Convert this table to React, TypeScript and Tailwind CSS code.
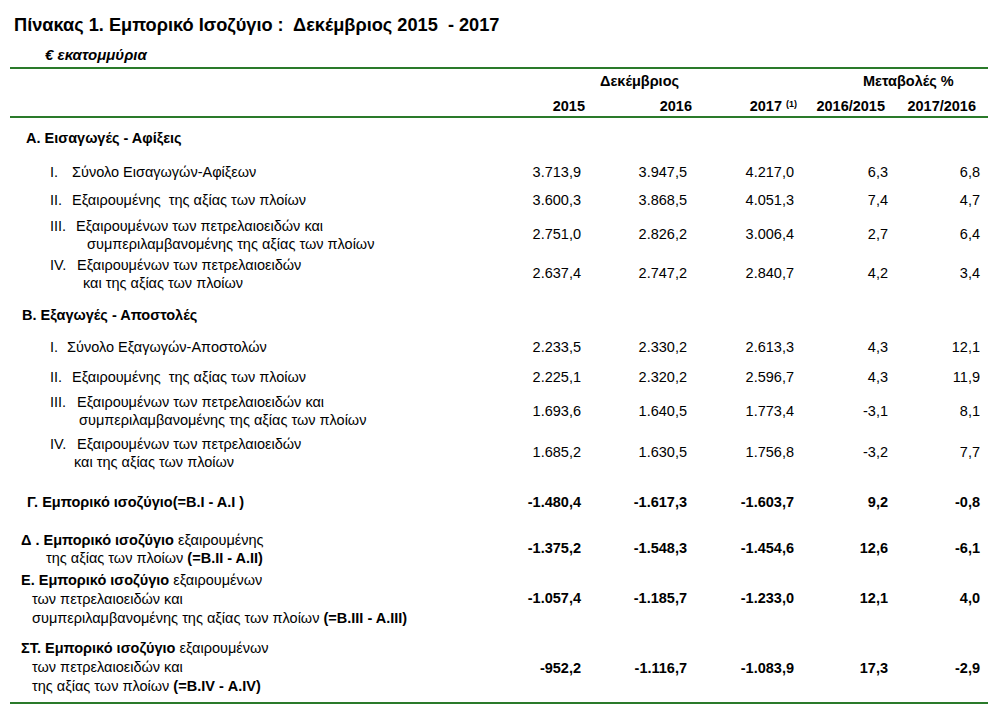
import React from 'react';

type Row = {
  h: string;
  label: React.ReactNode;
  vals?: string[];
  vpt?: string;
  bold?: boolean;
};

const B = ({ children }: { children: React.ReactNode }) => <span className="font-bold">{children}</span>;

const rows: Row[] = [
  {
    h: 'h-[34px]',
    label: <div className="pl-[16px] font-bold">Α. Εισαγωγές - Αφίξεις</div>,
  },
  {
    h: 'h-[28px]',
    label: (
      <div className="pl-[40px]">
        <span className="inline-block w-[22px]">I.</span>Σύνολο Εισαγωγών-Αφίξεων
      </div>
    ),
    vals: ['3.713,9', '3.947,5', '4.217,0', '6,3', '6,8'],
  },
  {
    h: 'h-[26px]',
    label: (
      <div className="pl-[40px] whitespace-pre">
        <span className="inline-block w-[22px]">II.</span>Εξαιρουμένης  της αξίας των πλοίων
      </div>
    ),
    vals: ['3.600,3', '3.868,5', '4.051,3', '7,4', '4,7'],
  },
  {
    h: 'h-[39px]',
    vpt: 'pt-[8px]',
    label: (
      <>
        <div className="pl-[40px]">
          <span className="inline-block w-[26px]">III.</span>Εξαιρουμένων των πετρελαιοειδών και
        </div>
        <div className="pl-[77px]">συμπεριλαμβανομένης της αξίας των πλοίων</div>
      </>
    ),
    vals: ['2.751,0', '2.826,2', '3.006,4', '2,7', '6,4'],
  },
  {
    h: 'h-[50px]',
    vpt: 'pt-[8px]',
    label: (
      <>
        <div className="pl-[40px]">
          <span className="inline-block w-[27px]">IV.</span>Εξαιρουμένων των πετρελαιοειδών
        </div>
        <div className="pl-[73px]">και της αξίας των πλοίων</div>
      </>
    ),
    vals: ['2.637,4', '2.747,2', '2.840,7', '4,2', '3,4'],
  },
  {
    h: 'h-[32px]',
    label: <div className="pl-[12px] font-bold">Β. Εξαγωγές - Αποστολές</div>,
  },
  {
    h: 'h-[30px]',
    label: (
      <div className="pl-[40px]">
        <span className="inline-block w-[17px]">I.</span>Σύνολο Εξαγωγών-Αποστολών
      </div>
    ),
    vals: ['2.233,5', '2.330,2', '2.613,3', '4,3', '12,1'],
  },
  {
    h: 'h-[25px]',
    label: (
      <div className="pl-[40px] whitespace-pre">
        <span className="inline-block w-[22px]">II.</span>Εξαιρουμένης  της αξίας των πλοίων
      </div>
    ),
    vals: ['2.225,1', '2.320,2', '2.596,7', '4,3', '11,9'],
  },
  {
    h: 'h-[42px]',
    vpt: 'pt-[9px]',
    label: (
      <>
        <div className="pl-[40px]">
          <span className="inline-block w-[27px]">III.</span>Εξαιρουμένων των πετρελαιοειδών και
        </div>
        <div className="pl-[69px]">συμπεριλαμβανομένης της αξίας των πλοίων</div>
      </>
    ),
    vals: ['1.693,6', '1.640,5', '1.773,4', '-3,1', '8,1'],
  },
  {
    h: 'h-[58px]',
    vpt: 'pt-[8px]',
    label: (
      <>
        <div className="pl-[40px]">
          <span className="inline-block w-[27px]">IV.</span>Εξαιρουμένων των πετρελαιοειδών
        </div>
        <div className="pl-[64px] leading-[19px]">και της αξίας των πλοίων</div>
      </>
    ),
    vals: ['1.685,2', '1.630,5', '1.756,8', '-3,2', '7,7'],
  },
  {
    h: 'h-[38px]',
    bold: true,
    label: <div className="pl-[17px] font-bold">Γ. Εμπορικό ισοζύγιο(=Β.Ι - Α.Ι )</div>,
    vals: ['-1.480,4', '-1.617,3', '-1.603,7', '9,2', '-0,8'],
  },
  {
    h: 'h-[40px]',
    bold: true,
    vpt: 'pt-[8px]',
    label: (
      <>
        <div className="pl-[11px]">
          <B>Δ . Εμπορικό ισοζύγιο</B> εξαιρουμένης
        </div>
        <div className="pl-[36px]">
          της αξίας των πλοίων <B>(=Β.ΙΙ - Α.ΙΙ)</B>
        </div>
      </>
    ),
    vals: ['-1.375,2', '-1.548,3', '-1.454,6', '12,6', '-6,1'],
  },
  {
    h: 'h-[68px]',
    bold: true,
    vpt: 'pt-[18px]',
    label: (
      <div className="leading-[19px]">
        <div className="pl-[11px]">
          <B>Ε. Εμπορικό ισοζύγιο</B> εξαιρουμένων
        </div>
        <div className="pl-[22px]">των πετρελαιοειδών και</div>
        <div className="pl-[22px]">
          συμπεριλαμβανομένης της αξίας των πλοίων <B>(=Β.ΙΙΙ - Α.ΙΙΙ)</B>
        </div>
      </div>
    ),
    vals: ['-1.057,4', '-1.185,7', '-1.233,0', '12,1', '4,0'],
  },
  {
    h: 'h-[63px]',
    bold: true,
    vpt: 'pt-[20px]',
    label: (
      <div className="leading-[19px]">
        <div className="pl-[11px]">
          <B>ΣΤ. Εμπορικό ισοζύγιο</B> εξαιρουμένων
        </div>
        <div className="pl-[22px]">των πετρελαιοειδών και</div>
        <div className="pl-[22px]">
          της αξίας των πλοίων <B>(=Β.ΙV - Α.ΙV)</B>
        </div>
      </div>
    ),
    vals: ['-952,2', '-1.116,7', '-1.083,9', '17,3', '-2,9'],
  },
];

const colW = ['w-[100px]', 'w-[106px]', 'w-[107px]', 'w-[94px]', 'w-[92px]'];

export default function App() {
  return (
    <div className="min-h-screen bg-white text-black font-['Liberation_Sans',Arial,sans-serif]">
      <div className="ml-[10px] w-[978px]">
        {/* Τίτλος */}
        <h1 className="pt-[15px] pl-[4px] text-[18.2px] leading-[20px] font-bold">
          Πίνακας 1. Εμπορικό Ισοζύγιο :&nbsp; Δεκέμβριος 2015&nbsp; - 2017
        </h1>
        <div className="mt-[12px] pl-[35px] text-[15px] leading-[16px] font-bold italic">€ εκατομμύρια</div>

        {/* Κεφαλίδα πίνακα */}
        <div className="mt-[4px] border-t-2 border-b-2 border-[#2a7a2a] text-[14.5px] font-bold">
          <div className="flex h-[25px] items-center">
            <div className="w-[590px]" />
            <div className="w-[263px]">Δεκέμβριος</div>
            <div>Μεταβολές %</div>
          </div>
          <div className="flex h-[22px] items-start pt-[2px]">
            <div className="w-[471px]" />
            <div className="w-[104px] text-right">2015</div>
            <div className="w-[107px] text-right">2016</div>
            <div className="w-[105px] text-right">
              2017 <sup className="text-[9px] font-bold">(1)</sup>
            </div>
            <div className="w-[88px] text-right">2016/2015</div>
            <div className="w-[91px] text-right">2017/2016</div>
          </div>
        </div>

        {/* Σώμα πίνακα */}
        <div className="pt-[11px] text-[14.5px] leading-[18px]">
          {rows.map((r, i) => (
            <div key={i} className={`flex ${r.h}`}>
              <div className="w-[471px] shrink-0">{r.label}</div>
              {r.vals &&
                r.vals.map((v, j) => (
                  <div key={j} className={`${colW[j]} shrink-0 text-right ${r.vpt ?? ''} ${r.bold ? 'font-bold' : ''}`}>
                    {v}
                  </div>
                ))}
            </div>
          ))}
        </div>
        <div className="border-t-2 border-[#2a7a2a]" />
      </div>
    </div>
  );
}
